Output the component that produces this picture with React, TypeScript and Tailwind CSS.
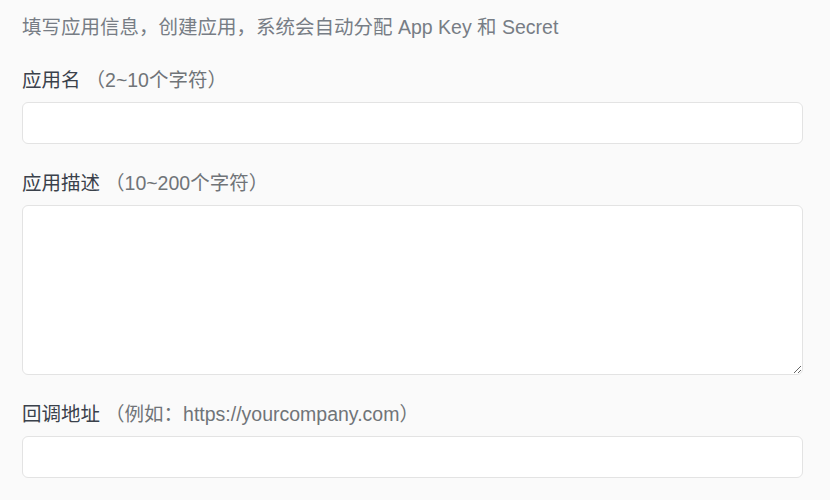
const font = "font-['Liberation_Sans','Noto_Sans_CJK_SC',sans-serif]";

function Field({ label, hint, children }: { label: string; hint: string; children: React.ReactNode }) {
  return (
    <div className="flex flex-col">
      <label className="mb-[9px] text-[19.5px] leading-[26px]">
        <span className="text-[#3a414b]">{label}</span>
        <span className="ml-[5px] text-[#707478]">（{hint}）</span>
      </label>
      {children}
    </div>
  );
}

export default function App() {
  return (
    <div className={`min-h-[500px] bg-[#fafafa] pl-[22px] pr-[27px] pt-[14px] ${font}`}>
      <p className="mb-[27px] text-[19.5px] leading-[26px] text-[#777d85]">
        填写应用信息，创建应用，系统会自动分配 App Key 和 Secret
      </p>
      <div className="flex flex-col gap-[26px]">
        <Field label="应用名" hint="2~10个字符">
          <input className="h-[42px] rounded-[6px] border border-[#e3e3e3] bg-white px-3 outline-none" />
        </Field>
        <Field label="应用描述" hint="10~200个字符">
          <textarea className="h-[170px] rounded-[6px] border border-[#e3e3e3] bg-white px-3 py-2 outline-none" />
        </Field>
        <Field label="回调地址" hint="例如：https://yourcompany.com">
          <input className="h-[42px] rounded-[6px] border border-[#e3e3e3] bg-white px-3 outline-none" />
        </Field>
      </div>
    </div>
  );
}
